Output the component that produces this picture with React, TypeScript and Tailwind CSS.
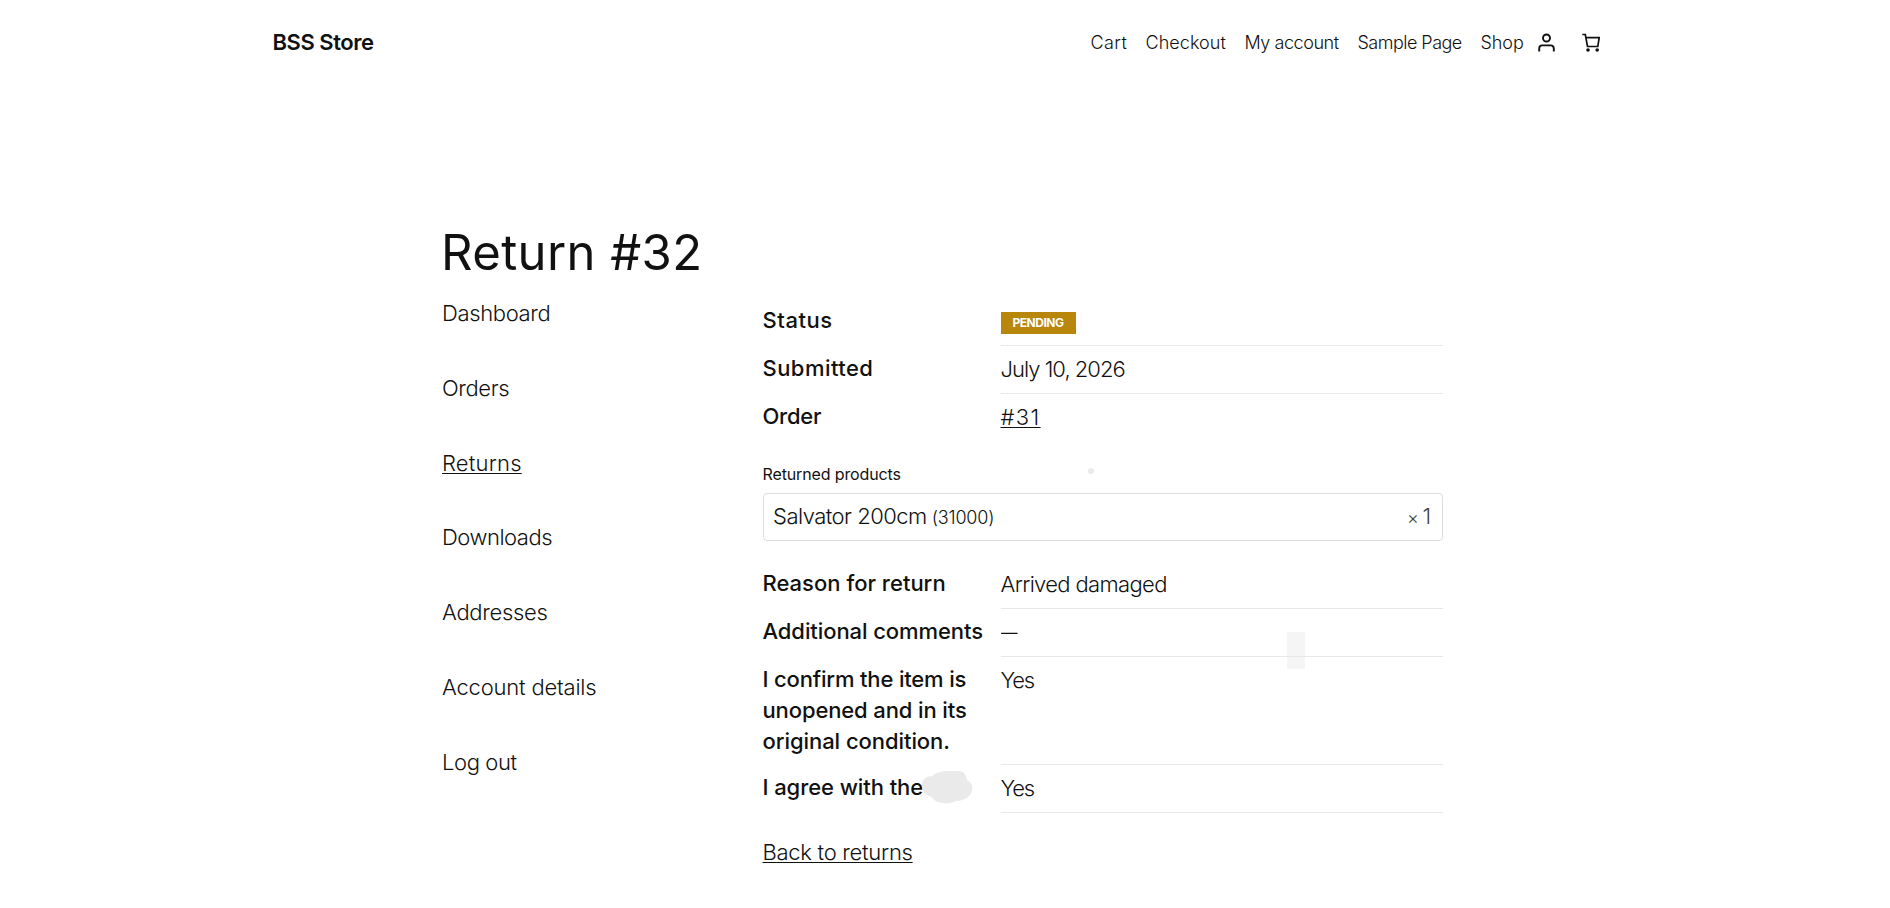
import type { ReactNode } from 'react'
import clsx from 'clsx'

const navLinks = [
  { label: 'Cart', className: 'w-[55px] tracking-[0.42px]' },
  { label: 'Checkout', className: 'w-[99px] tracking-[0.06px]' },
  { label: 'My account', className: 'w-[113px] tracking-[-0.44px]' },
  { label: 'Sample Page', className: 'w-[123px] tracking-[-0.52px]' },
  { label: 'Shop', className: 'w-[56px] tracking-[-0.05px]' },
]

const accountLinks = [
  { label: 'Dashboard', className: 'tracking-[-0.35px]' },
  { label: 'Orders', className: 'tracking-[-0.37px]' },
  { label: 'Returns', className: 'tracking-[0.2px]', active: true },
  { label: 'Downloads', className: 'tracking-[-0.48px]' },
  { label: 'Addresses', className: 'tracking-[-0.3px]' },
  { label: 'Account details', className: 'tracking-[-0.2px]' },
  { label: 'Log out', className: 'tracking-[-0.4px]' },
]

const linkClass = 'underline decoration-1 underline-offset-2'

interface RowProps {
  label: ReactNode
  labelClass?: string
  valueClass?: string
  rowClass?: string
  border?: boolean
  children: ReactNode
}

function Row({ label, labelClass, valueClass, rowClass = 'h-12', border = true, children }: RowProps) {
  return (
    <div className={clsx('flex', rowClass)}>
      <dt className={clsx('w-[238px] shrink-0 pt-[7px] font-medium whitespace-nowrap', labelClass)}>{label}</dt>
      <dd className={clsx('relative flex-1 pt-2', border && 'border-b border-[#e8e8e8]', valueClass)}>{children}</dd>
    </div>
  )
}

function UserIcon() {
  return (
    <svg width="18" height="20" viewBox="0 0 18 20" fill="none" stroke="#111" strokeWidth="1.9">
      <circle cx="9.5" cy="5" r="3.5" />
      <path d="M2.2 18.6v-3.2a3 3 0 0 1 3-3h8.6a3 3 0 0 1 3 3v3.2" />
    </svg>
  )
}

function CartIcon() {
  return (
    <svg width="18" height="20" viewBox="0 0 18 20" fill="none" stroke="#111" strokeWidth="1.7">
      <path d="M0.3 1.5h3l2.2 12h10.3l1.4-8.9H4" />
      <circle cx="6" cy="17" r="1.8" fill="#111" stroke="none" />
      <circle cx="15.2" cy="17" r="1.8" fill="#111" stroke="none" />
    </svg>
  )
}

function Smudge() {
  return (
    <svg className="absolute left-[158px] top-[5px]" width="52" height="34" viewBox="0 0 52 34" fill="#eaeaea">
      <path d="M1 14C1 9 6 6 11 6C16 2 22 1 27 1H37C43 1 45 5 46 10C50 12 52 15 51 20C50 27 43 31 35 31C30 34 22 34 17 32C13 31 12 27 8 26C4 25 0 19 1 14Z" />
    </svg>
  )
}

export default function App() {
  return (
    <div className="h-[908px] overflow-hidden bg-white font-['Inter','Liberation_Sans',sans-serif] text-[22px] leading-[31px] font-light text-[#111]">
      <header className="flex h-[85px] items-center justify-between pr-[290.5px] pl-[272.5px]">
        <a className="font-semibold tracking-[-0.46px]">BSS Store</a>
        <nav className="flex items-center text-[18px]">
          {navLinks.map((link) => (
            <a key={link.label} className={clsx('whitespace-nowrap', link.className)}>
              {link.label}
            </a>
          ))}
          <div className="flex gap-[27px]">
            <UserIcon />
            <CartIcon />
          </div>
        </nav>
      </header>

      <main className="ml-[442px] w-[1001px] pt-[135px]">
        <h1 className="-ml-px h-[78px] text-[49px] leading-[66px] font-normal tracking-[0.4px]">Return #32</h1>

        <div className="flex">
          <ul className="w-[320.5px] shrink-0">
            {accountLinks.map((link) => (
              <li key={link.label} className="h-[74.8px]">
                <a className={clsx(link.className, link.active && linkClass)}>{link.label}</a>
              </li>
            ))}
          </ul>

          <section className="flex-1">
            <dl>
              <Row label="Status" labelClass="tracking-[0.55px]">
                <span className="mt-[6px] flex h-[22px] w-[75px] items-center justify-center bg-[#b8860b] text-[12px] leading-none font-bold tracking-[-0.45px] text-white">
                  PENDING
                </span>
              </Row>
              <Row label="Submitted" labelClass="tracking-[0.45px]" valueClass="tracking-[-0.98px]">
                July 10, 2026
              </Row>
              <Row label="Order" labelClass="tracking-[-0.25px]" border={false}>
                <a className={clsx(linkClass, 'tracking-[1.4px]')}>#31</a>
              </Row>
            </dl>

            <div className="relative mt-[21px] mb-5">
              <h2 className="h-[30px] text-base leading-[23px] font-normal tracking-[-0.13px]">Returned products</h2>
              <span className="absolute top-[5px] left-[325px] size-[6px] rounded-full bg-[#ebebeb]" />
              <div className="flex h-12 items-center justify-between rounded-[4px] border border-[#ddd] pr-[12px] pl-[9.5px]">
                <p className="flex items-baseline gap-[5px]">
                  <span className="tracking-[-0.52px]">Salvator 200cm</span>
                  <span className="text-[18px] tracking-[-0.19px]">(31000)</span>
                </p>
                <span className="tracking-[-1.2px] text-[#444]">
                  <span className="text-[18px]">×</span> 1
                </span>
              </div>
            </div>

            <dl>
              <Row label="Reason for return" labelClass="tracking-[0.01px]" valueClass="tracking-[-0.65px]">
                Arrived damaged
              </Row>
              <Row label="Additional comments" labelClass="tracking-[-0.08px]">
                <span className="absolute top-[23px] left-[286px] h-[37px] w-[18px] bg-[#e6e6e6]/40" />
                <span className="inline-block origin-left scale-x-75">—</span>
              </Row>
              <Row
                label={
                  <>
                    <span className="block tracking-[-0.17px]">I confirm the item is</span>
                    <span className="block tracking-[-0.12px]">unopened and in its</span>
                    <span className="block tracking-[-0.06px]">original condition.</span>
                  </>
                }
                valueClass="tracking-[-1.2px]"
                rowClass="h-[108px]"
              >
                Yes
              </Row>
              <Row
                label={
                  <>
                    I agree with the
                    <Smudge />
                  </>
                }
                labelClass="relative tracking-[-0.08px]"
                valueClass="tracking-[-1.2px]"
              >
                Yes
              </Row>
            </dl>

            <p className="mt-6">
              <a className={clsx(linkClass, 'tracking-[-0.28px]')}>Back to returns</a>
            </p>
          </section>
        </div>
      </main>
    </div>
  )
}
